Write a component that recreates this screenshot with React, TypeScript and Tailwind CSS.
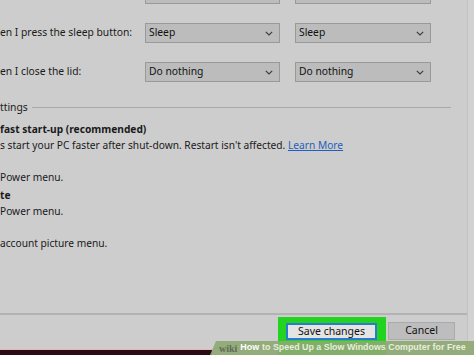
import React from 'react';

// Power options "system settings" panel, cropped as in the screenshot
const font = { fontFamily: '"Noto Sans", "Open Sans", Arial, sans-serif' };

function Chevron() {
  return (
    <svg width="8" height="5" viewBox="0 0 8 5" className="shrink-0">
      <path d="M0.8 0.8 L4 4 L7.2 0.8" fill="none" stroke="#3a3a3a" strokeWidth="1.1" />
    </svg>
  );
}

function Select({ value, width }: { value: string; width: string }) {
  return (
    <div
      className={`${width} h-[20px] flex items-center justify-between pl-[3px] pr-[6px] bg-[#bcbcbc] border border-[#999999] text-[10.3px] text-[#111]`}
    >
      <span>{value}</span>
      <Chevron />
    </div>
  );
}

function Row({ label, left, right }: { label: string; left: string; right: string }) {
  return (
    <div className="flex items-center h-[20px]">
      <div className="w-[145px] text-[10.3px] text-[#1a1a1a] whitespace-nowrap">{label}</div>
      <Select value={left} width="w-[135px]" />
      <div className="w-[15px]" />
      <Select value={right} width="w-[136px]" />
    </div>
  );
}

function Line({ children, bold }: { children: React.ReactNode; bold?: boolean }) {
  return (
    <div
      className={`h-[16px] leading-[16px] text-[10.2px] text-[#1a1a1a] whitespace-nowrap ${bold ? 'font-bold' : ''}`}
    >
      {children}
    </div>
  );
}

export default function App() {
  return (
    <div className="relative w-[474px] h-[355px] overflow-hidden bg-[#cdcdcd]" style={font}>
      <div className="flex h-full">
        <div className="w-[467px] flex flex-col">
          {/* dropdown rows */}
          <div className="flex flex-col gap-[19px] mt-[-16px]">
            <Row label="" left="" right="" />
            <Row label="en I press the sleep button:" left="Sleep" right="Sleep" />
            <Row label="en I close the lid:" left="Do nothing" right="Do nothing" />
          </div>

          {/* group heading */}
          <div className="flex items-center mt-[17px] h-[16px] w-[451px]">
            <span className="text-[10.3px] text-[#1a1a1a] leading-[16px]">ttings</span>
            <div className="flex-1 ml-[4px] h-px bg-[#a9a9a9]" />
          </div>

          <div className="flex flex-col mt-[6px]">
            <Line bold>fast start-up (recommended)</Line>
            <Line>
              s start your PC faster after shut-down. Restart isn't affected.{' '}
              <span className="text-[#1f5fbf] underline">Learn More</span>
            </Line>
            <Line bold> </Line>
            <Line>Power menu.</Line>
            <div className="mt-[2px]">
              <Line bold>te</Line>
              <Line>Power menu.</Line>
            </div>
            <Line bold> </Line>
            <Line>account picture menu.</Line>
          </div>

          <div className="flex-1" />
          <div className="h-[2px] bg-[#b3b3b3] w-[474px]" />

          {/* buttons */}
          <div className="flex items-start h-[40px] pl-[278px]">
            <div className="mt-[2px] w-[108px] h-[40px] bg-[#22d31f] pt-[6px] pl-[8px]">
              <div className="w-[91px] h-[17px] bg-[#e4e4e4] border-2 border-[#2a7ad0] flex items-center justify-center text-[10.5px] text-[#111]">
                Save changes
              </div>
            </div>
            <div className="ml-[2px] mt-[7px] w-[67px] h-[18px] bg-[#bdbdbd] border border-[#aaaaaa] flex items-center justify-center text-[10.5px] text-[#111]">
              Cancel
            </div>
          </div>
        </div>
        <div className="w-px bg-[#c2c2c2]" />
        <div className="flex-1 bg-[#d2d2d2]" />
      </div>

      {/* bottom dark strip */}
      <div className="absolute left-0 bottom-0 w-[212px] h-[6px] bg-[#2b0b14] border-t border-[#e8b4bb]" />

      {/* wikiHow caption overlay */}
      <div
        className="absolute bottom-0 left-[210px] right-0 h-[14px] bg-[#8ea873]/90 flex items-center pl-[9px] text-[8.9px] font-bold text-white whitespace-nowrap"
        style={{ clipPath: 'polygon(6px 0, 100% 0, 100% 100%, 0 100%)', fontFamily: '"Liberation Sans", Arial, sans-serif' }}
      >
        <span className="text-[#5f6b52] mr-[3px] text-[10px]" style={{ fontFamily: '"Liberation Serif", serif' }}>wiki</span>
        <span className="mr-[3px]">How</span>
        <span className="text-[#e8eedb]">to Speed Up a Slow Windows Computer for Free</span>
      </div>
    </div>
  );
}
